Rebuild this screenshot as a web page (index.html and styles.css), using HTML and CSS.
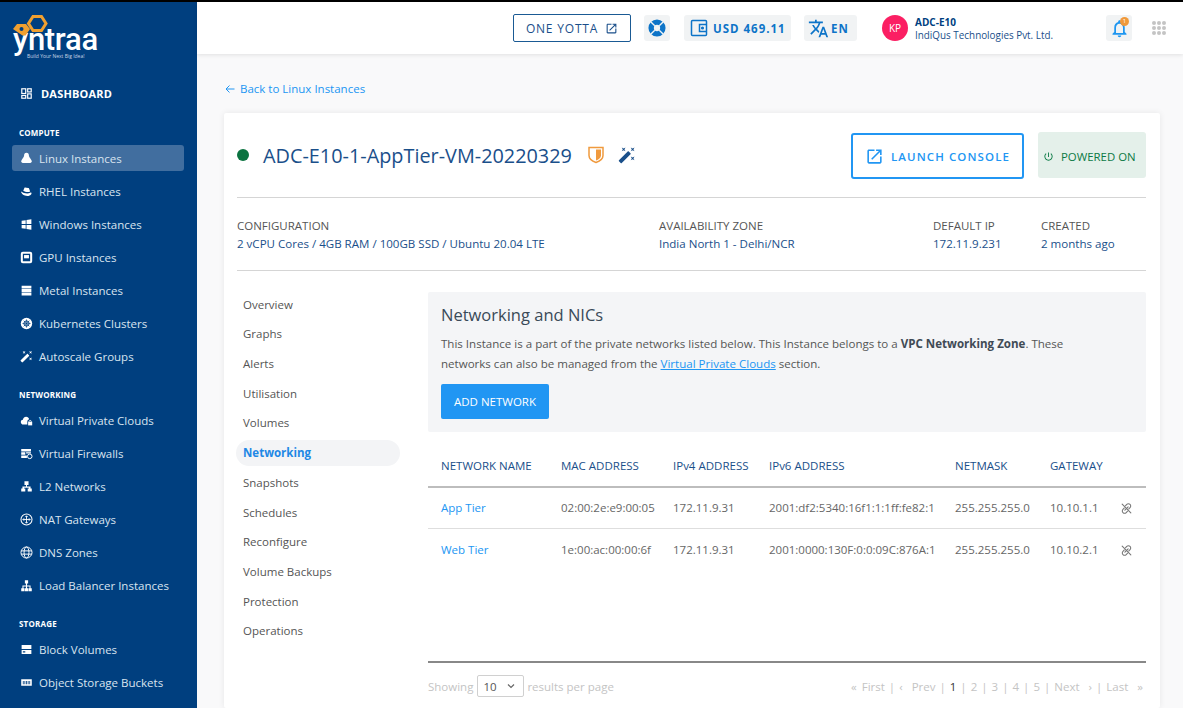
FILE: index.html
```html
<!DOCTYPE html>
<html lang="en">
  <head>
    <meta charset="UTF-8" />
    <meta name="viewport" content="width=device-width, initial-scale=1.0" />
    <title>Networking and NICs</title>
    <link rel="stylesheet" href="styles.css">
  </head>
  <body>
    <svg class="defs" xmlns="http://www.w3.org/2000/svg">
      <symbol id="i-open" viewBox="0 0 24 24"><path d="M19 19H5V5h7V3H5c-1.11 0-2 .9-2 2v14c0 1.1.89 2 2 2h14c1.1 0 2-.9 2-2v-7h-2v7zM14 3v2h3.59l-9.83 9.83 1.41 1.41L19 6.41V10h2V3h-7z"/></symbol>
      <symbol id="i-wand" viewBox="0 0 24 24"><path d="M7.5 5.6L10 7 8.6 4.5 10 2 7.5 3.4 5 2l1.4 2.5L5 7zm12 9.8L17 14l1.4 2.5L17 19l2.5-1.4L22 19l-1.4-2.5L22 14zM22 2l-2.5 1.4L17 2l1.4 2.5L17 7l2.5-1.4L22 7l-1.4-2.5zm-7.63 5.29c-.39-.39-1.02-.39-1.41 0L1.29 18.96c-.39.39-.39 1.02 0 1.41l2.34 2.34c.39.39 1.02.39 1.41 0L16.7 11.05c.39-.39.39-1.02 0-1.41l-2.33-2.35z"/></symbol>
      <symbol id="i-unlink" viewBox="0 0 24 24"><g fill="none" stroke="currentColor" stroke-width="2" stroke-linecap="round"><path d="M10 7l2.5-2.5a4.2 4.2 0 0 1 6 0 4.2 4.2 0 0 1 0 6L16 13"/><path d="M14 17l-2.5 2.5a4.2 4.2 0 0 1-6 0 4.2 4.2 0 0 1 0-6L8 11"/><path d="M9 15l6-6"/><path d="M4 4l16 16"/></g></symbol>
    </svg>

    <div class="app">
      <aside class="sidebar">
        <div class="logo">
          <div class="logo-name">yntraa</div>
          <svg class="logo-mark" viewBox="0 0 40 24" width="40" height="24">
            <path d="M20 2.500h8.500l4.500 7-4.500 7H20l-4.500-7z" fill="none" stroke="#f0a030" stroke-width="3"/>
            <path d="M4 10h9l4 5-4.500 6.500h-3L0 15z" fill="#f0a030"/>
            <circle cx="8.500" cy="15" r="2" fill="#003f7f"/>
          </svg>
          <div class="logo-tag">Build Your Next Big Idea!</div>
        </div>

        <a class="dash">
          <svg width="11" height="11" viewBox="0 0 14 14" fill="none" stroke="#fff" stroke-width="1.500"><rect x="1" y="1" width="5" height="6"/><rect x="8.500" y="1" width="4.500" height="4"/><rect x="1" y="9.500" width="5" height="3.500"/><rect x="8.500" y="7.500" width="4.500" height="5.500"/></svg>
          DASHBOARD
        </a>

        <div class="nav-label first">COMPUTE</div>
        <a class="nav-item active">
          <svg viewBox="0 0 16 16"><path d="M8 1c2 0 3 1.700 3 3.500 0 1.800 3 4.300 3.500 6.700.3 1.400-.8 2.300-2 2.300h-9c-1.200 0-2.300-.9-2-2.300C2 8.800 5 6.300 5 4.500 5 2.700 6 1 8 1z"/></svg>
          Linux Instances
        </a>
        <a class="nav-item">
          <svg viewBox="0 0 16 16"><path d="M4 7l1.500-3.500c.8-1 2-.3 3 0 1.200.2 2-.2 2.500.5L12.500 8c-2.500 1.200-6 .8-8.500-1z"/><path d="M1.500 8c2.500 2 8 3.500 11 1.500 1.500-.5 2 .5 1.500 1.500-1.500 2.500-5 3-8 2-2-.7-5-3-4.500-5z"/></svg>
          RHEL Instances
        </a>
        <a class="nav-item">
          <svg viewBox="0 0 16 16"><path d="M2 3.500l5-.8v4.800H2zM8 2.500l6-1v6H8zM2 8.500h5v4.800l-5-.8zM8 8.500h6v6l-6-1z"/></svg>
          Windows Instances
        </a>
        <a class="nav-item">
          <svg viewBox="0 0 16 16"><path fill-rule="evenodd" d="M3.500 1h9A2.500 2.500 0 0 1 15 3.500v9a2.500 2.500 0 0 1-2.500 2.500h-9A2.500 2.500 0 0 1 1 12.500v-9A2.500 2.500 0 0 1 3.500 1zM3.500 3.500v9h9v-9z"/><rect x="5" y="5" width="6" height="4"/></svg>
          GPU Instances
        </a>
        <a class="nav-item">
          <svg viewBox="0 0 16 16"><path d="M2 2h12v3.500H2zM2 6.300h12v3.500H2zM2 10.600h12v3.500H2z"/></svg>
          Metal Instances
        </a>
        <a class="nav-item">
          <svg viewBox="0 0 16 16"><circle cx="8" cy="8" r="7"/><circle cx="8" cy="8" r="3.200" fill="none" stroke="#003f7f" stroke-width="1.200"/><path d="M8 3v10M3 8h10M4.500 4.500l7 7M11.500 4.500l-7 7" stroke="#003f7f" stroke-width=".8"/></svg>
          Kubernetes Clusters
        </a>
        <a class="nav-item">
          <svg viewBox="0 0 24 24"><use href="#i-wand"/></svg>
          Autoscale Groups
        </a>

        <div class="nav-label">NETWORKING</div>
        <a class="nav-item">
          <svg viewBox="0 0 16 16"><path d="M4.500 13C2 13 1 11.500 1 9.800 1 8 2.300 7 3.500 7 4 4.800 5.600 3.500 7.500 3.500c2 0 3.300 1.300 3.800 3-1.800.5-2.300 2-2.300 3.500V13z"/><rect x="10" y="9.500" width="5" height="4.500"/><path d="M11 9.500c0-2.200 3-2.200 3 0" fill="none" stroke="#fff"/></svg>
          Virtual Private Clouds
        </a>
        <a class="nav-item">
          <svg viewBox="0 0 16 16"><path d="M1.500 2.500h12v3h-12zM1.500 6.500h5v3h-5zM7.500 6.500h6v1.500h-6zM1.500 10.500h7v3h-7z"/><circle cx="12" cy="11.500" r="2.800" fill="none" stroke="#fff" stroke-width="1.200"/></svg>
          Virtual Firewalls
        </a>
        <a class="nav-item">
          <svg viewBox="0 0 16 16"><path d="M5.500 1.500h5v4.500H8.600v2H13v2.500h1.500v3.500h-5v-3.500H11V9.500H5v1H6.500V14h-5v-3.500H3V8h4.400V6H5.500z"/></svg>
          L2 Networks
        </a>
        <a class="nav-item">
          <svg class="line" viewBox="0 0 16 16" stroke="#fff"><circle cx="8" cy="8" r="6.800" stroke-width="1.300"/><path d="M8 3.500v9M3.500 8h9M6.500 5L8 3.500 9.500 5M6.500 11L8 12.500 9.500 11M5 6.500L3.500 8 5 9.500M11 6.500L12.500 8 11 9.500" stroke-width="1.100"/></svg>
          NAT Gateways
        </a>
        <a class="nav-item">
          <svg class="line" viewBox="0 0 16 16" stroke="#fff" stroke-width="1.200"><circle cx="8" cy="8" r="6.800"/><ellipse cx="8" cy="8" rx="3" ry="6.800"/><path d="M1.500 6h13M1.500 10h13"/></svg>
          DNS Zones
        </a>
        <a class="nav-item">
          <svg viewBox="0 0 16 16"><path d="M6 1.500h4v4H8.700V8H13v3.500h1.500V15h-4v-3.500h1.200V9.300H8.700v2.200H10V15H6v-3.500h1.300V9.300H4.300v2.200H5.500V15h-4v-3.500H3V8h4.300V5.500H6z"/></svg>
          Load Balancer Instances
        </a>

        <div class="nav-label">STORAGE</div>
        <a class="nav-item">
          <svg viewBox="0 0 16 16"><path fill-rule="evenodd" d="M2 2.500h12v5H2zM2 8.500h12v5H2zM3.500 10.300v1.400h3v-1.400z"/></svg>
          Block Volumes
        </a>
        <a class="nav-item">
          <svg viewBox="0 0 16 16"><path fill-rule="evenodd" d="M1.500 4h13v8h-13zM3.500 6v4h1V6zm2 0v4h1V6zm2 0v4h1V6zm2 0v4h1V6zm2 0v4h1V6z"/></svg>
          Object Storage Buckets
        </a>
      </aside>

      <div class="main">
        <header class="topbar">
          <a class="yotta">ONE YOTTA
            <svg width="13" height="13"><use href="#i-open"/></svg>
          </a>
          <span class="chip chip-help">
            <svg width="18" height="18" viewBox="0 0 20 20">
              <circle cx="10" cy="10" r="6.500" fill="none" stroke="#0d74c8" stroke-width="6"/>
              <path d="M3 3l4.500 4.500M17 3l-4.500 4.500M3 17l4.500-4.500M17 17l-4.500-4.500" stroke="#f1f3f4" stroke-width="1.500"/>
            </svg>
          </span>
          <span class="chip chip-wallet">
            <svg width="18" height="18" viewBox="0 0 18 18" fill="none" stroke="#0d74c8" stroke-width="1.500">
              <rect x="1.500" y="1.500" width="15" height="15" rx="1"/>
              <path d="M16.500 5.500h-7v7h7"/>
              <circle cx="12.500" cy="9" r=".8" fill="#0d74c8"/>
            </svg>
            USD 469.11
          </span>
          <span class="chip chip-lang">
            <svg width="21" height="21" viewBox="0 0 24 24" fill="#0d74c8"><path d="M12.870 15.070l-2.540-2.510.03-.03c1.740-1.940 2.980-4.170 3.710-6.530H17V4h-7V2H8v2H1v1.990h11.170C11.500 7.920 10.440 9.750 9 11.350 8.070 10.320 7.300 9.190 6.690 8h-2c.73 1.630 1.730 3.170 2.980 4.560l-5.090 5.020L4 19l5-5 3.110 3.110.76-2.040zM18.500 10h-2L12 22h2l1.120-3h4.750L21 22h2l-4.500-12zm-2.620 7l1.620-4.330L19.120 17h-3.240z"/></svg>
            EN
          </span>
          <span class="avatar">KP</span>
          <div class="account">
            <div class="account-id">ADC-E10</div>
            <div class="account-org">IndiQus Technologies Pvt. Ltd.</div>
          </div>
          <span class="chip chip-bell">
            <svg width="21" height="21" viewBox="0 0 24 24" fill="#1e96f0"><path d="M12 22c1.100 0 2-.9 2-2h-4c0 1.100.9 2 2 2zm6-6v-5c0-3.070-1.630-5.640-4.500-6.320V4c0-.83-.67-1.500-1.500-1.500s-1.500.67-1.500 1.500v.68C7.640 5.360 6 7.920 6 11v5l-2 2v1h16v-1l-2-2zm-2 1H8v-6c0-2.480 1.510-4.500 4-4.500s4 2.020 4 4.500v6z"/></svg>
            <span class="badge">1</span>
          </span>
          <div class="apps">
            <i></i><i></i><i></i><i></i><i></i><i></i><i></i><i></i><i></i>
          </div>
        </header>

        <div class="content">
          <a class="back">
            <svg width="10" height="10" viewBox="0 0 10 10" fill="none" stroke="#2196f3" stroke-width="1"><path d="M9.500 5H1M4.500 1.500L1 5l3.500 3.500"/></svg>
            Back to Linux Instances
          </a>

          <section class="card">
            <div class="card-head">
              <span class="status-dot"></span>
              <h1 class="vm-name">ADC-E10-1-AppTier-VM-20220329</h1>
              <svg class="shield" width="16" height="18" viewBox="0 0 16 18">
                <path d="M1 1.500h14v8c0 3.500-3.500 5.800-7 7-3.500-1.200-7-3.500-7-7z" fill="#fff" stroke="#f09a3e" stroke-width="1.500"/>
                <path d="M8 3.500h5v6c0 2.500-2.500 4-5 5z" fill="#f09a3e"/>
              </svg>
              <svg class="wand" width="18" height="18"><use href="#i-wand"/></svg>
              <a class="launch">
                <svg width="19" height="19"><use href="#i-open"/></svg>
                LAUNCH CONSOLE
              </a>
              <span class="power">
                <svg width="11" height="11" viewBox="0 0 24 24" fill="#0b7a45"><path d="M13 3h-2v10h2V3zm4.830 2.170l-1.420 1.420C17.990 7.860 19 9.810 19 12c0 3.870-3.130 7-7 7s-7-3.130-7-7c0-2.190 1.010-4.140 2.580-5.420L6.170 5.170C4.230 6.820 3 9.260 3 12c0 4.970 4.030 9 9 9s9-4.030 9-9c0-2.740-1.230-5.180-3.170-6.830z"/></svg>
                POWERED ON
              </span>
            </div>

            <div class="meta">
              <div>
                <div class="meta-label">CONFIGURATION</div>
                <div class="meta-value">2 vCPU Cores / 4GB RAM / 100GB SSD / Ubuntu 20.04 LTE</div>
              </div>
              <div>
                <div class="meta-label">AVAILABILITY ZONE</div>
                <div class="meta-value">India North 1 - Delhi/NCR</div>
              </div>
              <div>
                <div class="meta-label">DEFAULT IP</div>
                <div class="meta-value">172.11.9.231</div>
              </div>
              <div>
                <div class="meta-label">CREATED</div>
                <div class="meta-value">2 months ago</div>
              </div>
            </div>

            <div class="detail">
              <nav class="tabs">
                <a>Overview</a>
                <a>Graphs</a>
                <a>Alerts</a>
                <a>Utilisation</a>
                <a>Volumes</a>
                <a class="current">Networking</a>
                <a>Snapshots</a>
                <a>Schedules</a>
                <a>Reconfigure</a>
                <a>Volume Backups</a>
                <a>Protection</a>
                <a>Operations</a>
              </nav>

              <div class="pane">
                <div class="intro">
                  <h2>Networking and NICs</h2>
                  <p>This Instance is a part of the private networks listed below. This Instance belongs to a <strong>VPC Networking Zone</strong>. These networks can also be managed from the <a>Virtual Private Clouds</a> section.</p>
                  <button class="add-btn">ADD NETWORK</button>
                </div>

                <table class="nics">
                  <thead>
                    <tr>
                      <th class="c-name">NETWORK NAME</th>
                      <th class="c-mac">MAC ADDRESS</th>
                      <th class="c-ip4">IPv4 ADDRESS</th>
                      <th class="c-ip6">IPv6 ADDRESS</th>
                      <th class="c-mask">NETMASK</th>
                      <th class="c-gate">GATEWAY</th>
                      <th></th>
                    </tr>
                  </thead>
                  <tbody>
                    <tr>
                      <td><a>App Tier</a></td>
                      <td>02:00:2e:e9:00:05</td>
                      <td>172.11.9.31</td>
                      <td>2001:df2:5340:16f1:1:1ff:fe82:1</td>
                      <td>255.255.255.0</td>
                      <td>10.10.1.1</td>
                      <td><svg class="unlink" width="13" height="13"><use href="#i-unlink"/></svg></td>
                    </tr>
                    <tr>
                      <td><a>Web Tier</a></td>
                      <td>1e:00:ac:00:00:6f</td>
                      <td>172.11.9.31</td>
                      <td>2001:0000:130F:0:0:09C:876A:1</td>
                      <td>255.255.255.0</td>
                      <td>10.10.2.1</td>
                      <td><svg class="unlink" width="13" height="13"><use href="#i-unlink"/></svg></td>
                    </tr>
                  </tbody>
                </table>

                <div class="pager">
                  <span>Showing</span>
                  <span class="per-page">10
                    <svg width="8" height="6" viewBox="0 0 8 6" fill="none" stroke="#666" stroke-width="1.200"><path d="M1 1.500l3 3 3-3"/></svg>
                  </span>
                  <span>results per page</span>
                  <div class="pages">
                    <span class="first-link">&#171; First</span><i>|</i>
                    <span class="wide">&#8249; Prev</span><i>|</i>
                    <b>1</b><i>|</i>
                    <span>2</span><i>|</i>
                    <span>3</span><i>|</i>
                    <span>4</span><i>|</i>
                    <span>5</span><i>|</i>
                    <span class="wide">Next &#8250;</span><i>|</i>
                    <span class="wide">Last &#187;</span>
                  </div>
                </div>
              </div>
            </div>
          </section>
        </div>
      </div>
    </div>
  </body>
</html>
```

FILE: styles.css
```css
* {
  box-sizing: border-box;
}

html,
body {
  margin: 0;
  height: 708px;
  overflow: hidden;
}

body {
  font-family: "Open Sans", Arial, sans-serif;
  font-size: 12px;
  background: #f9f9fa;
  color: #555;
  border-top: 2px solid #000;
}

.defs {
  display: none;
}

.app {
  display: flex;
  height: 706px;
}

/* sidebar */
.sidebar {
  width: 197px;
  flex-shrink: 0;
  background: #003f7f;
  color: #fff;
  padding: 12px 13px 0 12px;
  overflow: hidden;
}

.logo {
  position: relative;
  height: 45px;
  margin-left: 1px;
}

.logo-mark {
  position: absolute;
  left: 0;
  top: 0;
}

.logo-name {
  position: absolute;
  left: 0;
  top: 8px;
  font-family: Roboto, sans-serif;
  font-size: 31px;
  line-height: 36px;
  font-weight: 500;
  letter-spacing: -0.3px;
}

.logo-tag {
  position: absolute;
  left: 14px;
  top: 39px;
  font-size: 5px;
  line-height: 7px;
  white-space: nowrap;
  color: #c8d6e6;
}

.dash {
  display: flex;
  align-items: center;
  gap: 9px;
  margin: 21px 0 0 9px;
  height: 26px;
  font-size: 11px;
  font-weight: 700;
  letter-spacing: 0.2px;
}

.nav-label {
  margin: 16px 0 0 7px;
  height: 22px;
  line-height: 19px;
  font-size: 8px;
  font-weight: 700;
  letter-spacing: 0.2px;
}

.nav-label.first {
  margin-top: 17px;
}

.nav-item {
  display: flex;
  align-items: center;
  gap: 6px;
  height: 26px;
  margin-bottom: 7px;
  padding-left: 8px;
  border-radius: 3px;
  font-size: 11.500px;
  color: #d9e4ef;
  white-space: nowrap;
}

.nav-item svg {
  width: 13px;
  height: 13px;
  fill: #fff;
  flex-shrink: 0;
}

.nav-item svg.line {
  fill: none;
}

.nav-item.active {
  background: #416e9f;
}

/* top bar */
.main {
  flex: 1;
  min-width: 0;
}

.topbar {
  display: flex;
  align-items: center;
  height: 52px;
  padding-right: 17px;
  background: #fff;
  box-shadow: 0 1px 4px rgba(0, 0, 0, 0.1);
  position: relative;
}

.yotta {
  display: flex;
  align-items: center;
  justify-content: center;
  gap: 7px;
  width: 118px;
  height: 28px;
  margin-left: auto;
  border: 1px solid #1a5a94;
  border-radius: 2px;
  font-size: 12px;
  letter-spacing: 0.8px;
  color: #1a4f8a;
  fill: #1a4f8a;
}

.chip {
  display: flex;
  align-items: center;
  justify-content: center;
  height: 26px;
  background: #f1f3f4;
  border-radius: 3px;
  color: #0d74c8;
  font-weight: 700;
  font-size: 11.500px;
  letter-spacing: 1px;
  position: relative;
}

.chip-help {
  width: 26px;
  margin-left: 13px;
}

.chip-wallet {
  width: 107px;
  margin-left: 14px;
  gap: 5px;
  justify-content: flex-start;
  padding-left: 6px;
}

.chip-lang {
  width: 53px;
  margin-left: 13px;
  gap: 2px;
  justify-content: flex-start;
  padding-left: 4px;
}

.avatar {
  display: flex;
  align-items: center;
  justify-content: center;
  width: 26px;
  height: 26px;
  margin-left: 25px;
  border-radius: 50%;
  background: #fb1f63;
  color: #fff;
  font-size: 10px;
}

.account {
  width: 191px;
  margin-left: 7px;
  padding-top: 1px;
  line-height: 13px;
}

.account-id {
  font-size: 10px;
  font-weight: 700;
  color: #003f7f;
}

.account-org {
  font-size: 9.900px;
  color: #1a4f8a;
}

.chip-bell {
  width: 26px;
}

.badge {
  position: absolute;
  top: 2px;
  right: 3px;
  width: 9px;
  height: 9px;
  border-radius: 50%;
  background: #f0993a;
  color: #fff;
  font-size: 6px;
  line-height: 9px;
  font-weight: 400;
  letter-spacing: 0;
  text-align: center;
}

.apps {
  display: grid;
  grid-template-columns: repeat(3, 4px);
  gap: 1px;
  margin-left: 20px;
}

.apps i {
  width: 4px;
  height: 4px;
  border-radius: 50%;
  background: #c4c4c4;
}

/* content */
.content {
  padding: 27px 23px 0 27px;
}

.back {
  display: flex;
  align-items: flex-start;
  gap: 5px;
  height: 32px;
  font-size: 11.500px;
  line-height: 16px;
  color: #2196f3;
  margin-left: 1px;
}

.back svg {
  margin-top: 3px;
}

.card {
  background: #fff;
  box-shadow: 0 0 6px rgba(0, 0, 0, 0.08);
  border-radius: 2px;
  padding: 0 14px 0 13px;
  height: 595px;
}

.card-head {
  display: flex;
  align-items: center;
  height: 85px;
  border-bottom: 1px solid #d5d5d5;
}

.status-dot {
  width: 12px;
  height: 12px;
  border-radius: 50%;
  background: #0b7340;
}

.vm-name {
  margin: 0 0 0 14px;
  font-size: 19.850px;
  font-weight: 400;
  color: #1a4f8a;
}

.shield {
  margin-left: 16px;
}

.wand {
  margin-left: 14px;
  fill: #1a4f8a;
}

.launch {
  display: flex;
  align-items: center;
  justify-content: center;
  gap: 7px;
  width: 173px;
  height: 46px;
  margin: 2px 0 0 auto;
  border: 2px solid #2196f3;
  border-radius: 3px;
  color: #2196f3;
  fill: #2196f3;
  font-size: 11.500px;
  font-weight: 600;
  letter-spacing: 1.100px;
}

.power {
  display: flex;
  align-items: center;
  gap: 7px;
  width: 108px;
  height: 46px;
  margin: -1px 0 0 14px;
  padding: 3px 0 0 5px;
  background: #e4f0ea;
  border-radius: 3px;
  color: #0b7a45;
  font-size: 11.400px;
  white-space: nowrap;
}

.meta {
  display: grid;
  grid-template-columns: 422px 274px 108px 1fr;
  height: 73px;
  padding-top: 19px;
  border-bottom: 1px solid #d5d5d5;
  line-height: 17px;
}

.meta-label {
  font-size: 11.500px;
  color: #555;
}

.meta-value {
  margin-top: 1px;
  font-size: 11.550px;
  color: #1a4f8a;
}

.detail {
  display: flex;
  margin-top: 21px;
}

.tabs {
  width: 191px;
  flex-shrink: 0;
  margin-top: -0.300px;
  font-size: 11.500px;
}

.tabs a {
  display: block;
  width: 164px;
  height: 26px;
  margin: 0 0 3.700px -1px;
  padding-left: 7px;
  line-height: 26px;
  color: #555;
  border-radius: 13px;
}

.tabs a.current {
  background: #f3f4f6;
  color: #1e88e5;
  font-weight: 700;
}

.pane {
  flex: 1;
  min-width: 0;
}

.intro {
  height: 140px;
  padding: 11px 13px 0;
  background: #f4f5f7;
  border-radius: 2px;
}

.intro h2 {
  margin: 0 0 7px;
  font-size: 16.500px;
  line-height: 24px;
  font-weight: 400;
  color: #3a4a58;
}

.intro p {
  margin: 0;
  max-width: 640px;
  line-height: 20px;
  font-size: 11.550px;
  color: #555;
}

.intro strong {
  color: #3f4a55;
}

.intro p a {
  color: #2196f3;
  text-decoration: underline;
}

.add-btn {
  display: block;
  width: 108px;
  height: 35px;
  margin-top: 10px;
  border: none;
  border-radius: 2px;
  background: #2196f3;
  color: #fff;
  font-family: inherit;
  font-size: 11.500px;
}

.nics {
  width: 100%;
  margin-top: 13px;
  table-layout: fixed;
  border-collapse: collapse;
}

.nics th {
  height: 42px;
  padding: 0;
  text-align: left;
  font-weight: 400;
  font-size: 11.500px;
  color: #1a4f8a;
  border-bottom: 2px solid #bdbdbd;
}

.nics td {
  height: 41px;
  padding: 0;
  font-size: 11.500px;
  color: #666;
  border-bottom: 1px solid #dedede;
  white-space: nowrap;
}

.nics tr:last-child td {
  height: 42px;
  border-bottom: none;
}

.nics td a {
  color: #2196f3;
}

.c-name {
  width: 133px;
  padding-left: 13px !important;
}

.nics td:first-child {
  padding-left: 13px;
}

.c-mac {
  width: 112px;
}

.c-ip4 {
  width: 96px;
}

.c-ip6 {
  width: 186px;
}

.c-mask {
  width: 95px;
}

.c-gate {
  width: 70px;
}

.unlink {
  color: #777;
  vertical-align: middle;
}

.pager {
  display: flex;
  align-items: center;
  gap: 4px;
  height: 48px;
  margin-top: 91px;
  border-top: 2px solid #888;
  color: #c4c4c4;
  font-size: 11.500px;
}

.per-page {
  display: flex;
  align-items: center;
  justify-content: space-between;
  width: 47px;
  height: 22px;
  margin-right: -1px;
  padding: 0 8px 0 5px;
  border: 1px solid #d0d0d0;
  border-radius: 2px;
  color: #555;
}

.pages {
  display: flex;
  gap: 4px;
  margin-left: auto;
  margin-right: 3px;
  white-space: nowrap;
}

.pages i {
  font-style: normal;
}

.pages .wide {
  word-spacing: 6px;
}

.pages .first-link {
  word-spacing: 2px;
}

.pages b {
  font-weight: 400;
  color: #333;
}
```
